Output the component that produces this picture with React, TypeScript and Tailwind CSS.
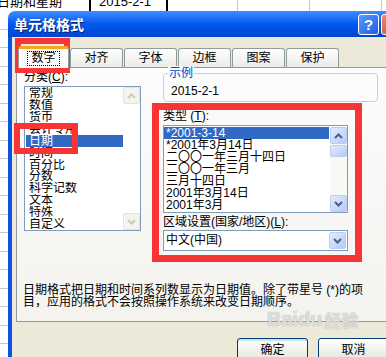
import React from "react";

const Chevron = ({ up, color }: { up?: boolean; color: string }) => (
  <svg width="9" height="6" viewBox="0 0 9 6">
    <path
      d={up ? "M1 5 L4.5 1.5 L8 5" : "M1 1 L4.5 4.5 L8 1"}
      fill="none"
      stroke={color}
      strokeWidth="2"
    />
  </svg>
);

const XpBtn = ({ up, h = 17 }: { up?: boolean; h?: number }) => (
  <div
    className="w-[17px] flex items-center justify-center rounded-[2px] border border-[#BCCDF5] bg-linear-to-br from-[#E3EBFE] to-[#B6CAF7]"
    style={{ height: h }}
  >
    <Chevron up={up} color="#4D6185" />
  </div>
);

const DisBtn = ({ up }: { up?: boolean }) => (
  <div className="w-[17px] h-[17px] flex items-center justify-center rounded-[2px] border border-[#E6E4DA] bg-[#F4F3EE]">
    <Chevron up={up} color="#CCCABC" />
  </div>
);

const categories = [
  "常规",
  "数值",
  "货币",
  "会计专用",
  "日期",
  "时间",
  "百分比",
  "分数",
  "科学记数",
  "文本",
  "特殊",
  "自定义",
];

const types = [
  "*2001-3-14",
  "*2001年3月14日",
  "二〇〇一年三月十四日",
  "二〇〇一年三月",
  "三月十四日",
  "2001年3月14日",
  "2001年3月",
];

export default function App() {
  return (
    <div className="relative w-[386px] h-[357px] overflow-hidden bg-white text-[12px] text-black font-['Liberation_Sans','Noto_Sans_CJK_SC',sans-serif]">
      {/* spreadsheet behind */}
      <div className="absolute left-0 top-0 w-full h-[11px] flex items-start">
        <div className="w-[89px] h-[11px] relative overflow-hidden">
          <div className="absolute -left-[3px] -top-[6px] text-[13px] leading-[15px] whitespace-nowrap">
            日期和星期
          </div>
        </div>
        <div className="w-[79px] h-[11px] border-x-2 border-black relative overflow-hidden">
          <div className="absolute left-[8px] -top-[6px] text-[13px] leading-[15px] whitespace-nowrap">
            2015-2-1
          </div>
        </div>
        <div className="w-[70px] h-[11px] border-r border-[#C8C8C8]" />
        <div className="w-[72px] h-[11px] border-r border-[#C8C8C8]" />
        <div className="w-[72px] h-[11px] border-r border-[#C8C8C8]" />
      </div>
      <div className="absolute left-0 top-[11px] w-[8px] flex flex-col">
        {Array.from({ length: 19 }).map((_, i) => (
          <div key={i} className="h-[18.5px] border-b border-[#C8C8C8]" />
        ))}
      </div>

      {/* dialog window */}
      <div className="absolute left-[8px] top-[11px] w-[398px] flex flex-col">
        {/* title bar */}
        <div className="h-[26px] rounded-t-[7px] flex items-center pl-[6px] pr-[4px] bg-linear-to-b from-[#3D8EFF] via-[#0058EE] to-[#0046D2]">
          <span className="text-white font-bold text-[14px] leading-[16px] font-['Noto_Sans_CJK_SC',sans-serif] [text-shadow:1px_1px_0_#0A1E6A]">
            单元格格式
          </span>
          <div className="ml-auto flex gap-[2px]">
            <div className="w-[21px] h-[21px] rounded-[3px] border border-white bg-linear-to-br from-[#5A9BFF] to-[#1E5CE0] flex items-center justify-center">
              <span className="text-white font-bold text-[15px] leading-[15px] font-['Liberation_Sans',sans-serif]">
                ?
              </span>
            </div>
            <div className="w-[21px] h-[21px] rounded-[3px] border border-white bg-linear-to-br from-[#E98D6F] to-[#C8411B]" />
          </div>
        </div>

        {/* body */}
        <div className="border-l-4 border-[#0A55E0] bg-[#ECE9D8] pl-[4px] pt-[9px] h-[340px]">
          {/* tabs */}
          <div className="flex items-end h-[21px] pl-[2px]">
            <div className="relative z-10 -mb-px w-[51px] h-[22px] bg-[#FCFCFE] border border-[#919B9C] border-b-0 border-t-[3px] border-t-[#F5A623] rounded-t-[3px] flex items-center justify-center">
              <span className="border border-dotted border-black px-[3px] leading-[13px]">
                数字
              </span>
            </div>
            <div className="ml-[1px] flex gap-[1px]">
              {["对齐", "字体", "边框", "图案", "保护"].map((t) => (
                <div
                  key={t}
                  className="w-[53px] h-[19px] bg-linear-to-b from-white to-[#ECEBE6] border border-[#919B9C] border-b-0 rounded-t-[3px] flex items-center justify-center"
                >
                  {t}
                </div>
              ))}
            </div>
          </div>

          {/* tab panel */}
          <div className="w-[378px] h-[255px] border border-[#919B9C] bg-linear-to-b from-[#FCFCFE] to-[#F4F3EE] pl-[7px] pt-[3px]">
            <div className="flex h-[180px]">
              {/* left column */}
              <div className="w-[117px] flex flex-col">
                <div className="h-[15px] leading-[13px]">
                  分类(<u>C</u>):
                </div>
                <div className="h-[145px] border border-[#7F9DB9] bg-white flex">
                  <div className="w-[98px] flex flex-col">
                    {categories.map((c) => (
                      <div
                        key={c}
                        className={
                          "h-[12px] leading-[12px] pl-[3px] whitespace-nowrap overflow-hidden " +
                          (c === "日期" ? "ml-[1px] bg-[#316AC5] text-white" : "ml-[1px]")
                        }
                      >
                        {c}
                      </div>
                    ))}
                  </div>
                  <div className="flex flex-col justify-between">
                    <DisBtn up />
                    <DisBtn />
                  </div>
                </div>
              </div>

              {/* right column */}
              <div className="ml-[22px] w-[215px] flex flex-col">
                <div className="mt-[2px] h-[29px] relative rounded-[4px] border border-[#D0D0BF] pl-[7px] pt-[11px] leading-[13px]">
                  <span className="absolute left-[4px] -top-[8px] px-[1px] bg-[#FAFAF9] text-[#0046D5] leading-[14px]">
                    示例
                  </span>
                  2015-2-1
                </div>
                <div className="mt-[8px] h-[15px] leading-[13px]">
                  类型 (<u>T</u>):
                </div>
                <div className="w-[185px] h-[88px] border border-[#7F9DB9] bg-white flex">
                  <div className="w-[165px] flex flex-col pt-[1px]">
                    {types.map((t, i) => (
                      <div
                        key={t}
                        className={
                          "h-[12px] leading-[12px] pl-[2px] whitespace-nowrap " +
                          (i === 0 ? "bg-[#316AC5] text-white" : "")
                        }
                      >
                        {t}
                      </div>
                    ))}
                  </div>
                  <div className="ml-[1px] w-[17px] flex flex-col bg-[#F8F8F4] pt-[1px]">
                    <XpBtn up />
                    <div className="mt-[1px] w-[17px] h-[12px] rounded-[2px] border border-[#BCCDF5] bg-linear-to-br from-[#E3EBFE] to-[#B6CAF7]" />
                    <div className="flex-1" />
                    <XpBtn />
                  </div>
                </div>
                <div className="h-[17px] leading-[16px] pt-[1px] whitespace-nowrap">
                  区域设置(国家/地区)(<u>L</u>):
                </div>
                <div className="w-[185px] h-[21px] border border-[#7F9DB9] bg-white flex items-center">
                  <span className="pl-[2px] flex-1 leading-[13px]">中文(中国)</span>
                  <div className="mr-[1px]">
                    <XpBtn />
                  </div>
                </div>
              </div>
            </div>

            <div className="mt-[33px] -ml-[1px] leading-[12px] whitespace-nowrap">
              日期格式把日期和时间系列数显示为日期值。除了带星号 (*)的项
              <br />
              目，应用的格式不会按照操作系统来改变日期顺序。
            </div>
          </div>

          {/* buttons */}
          <div className="mt-[16px] pl-[221px] flex gap-[10px]">
            <div className="w-[71px] h-[23px] rounded-[3px] border border-[#003C74] bg-linear-to-b from-white to-[#E6E5DE] shadow-[inset_0_-2px_0_#7DA2E8,inset_0_2px_0_#CEE3FF] flex items-center justify-center">
              确定
            </div>
            <div className="w-[71px] h-[23px] rounded-[3px] border border-[#003C74] bg-linear-to-b from-white to-[#E6E5DE] flex items-center justify-center">
              取消
            </div>
          </div>
        </div>
      </div>

      {/* red annotation boxes */}
      <div className="absolute left-[15px] top-[38px] w-[55px] h-[35px] border-[6px] border-[#F83434]" />
      <div className="absolute left-[14px] top-[123px] w-[64px] h-[31px] border-[6px] border-[#F83434]" />
      <div className="absolute left-[152px] top-[103px] w-[210px] h-[159px] border-[7px] border-[#F83434]" />

      {/* watermark */}
      <div className="absolute left-[267px] top-[308px] flex items-end text-white/70 font-bold [text-shadow:0_0_1px_#8C8C8C] font-['Liberation_Sans',sans-serif]">
        <span className="text-[20px] leading-[22px]">Bai</span>
        <span className="text-[20px] leading-[22px]">du</span>
        <span className="ml-[2px] text-[17px] leading-[20px] font-['Noto_Sans_CJK_SC',sans-serif]">
          经验
        </span>
      </div>
    </div>
  );
}
